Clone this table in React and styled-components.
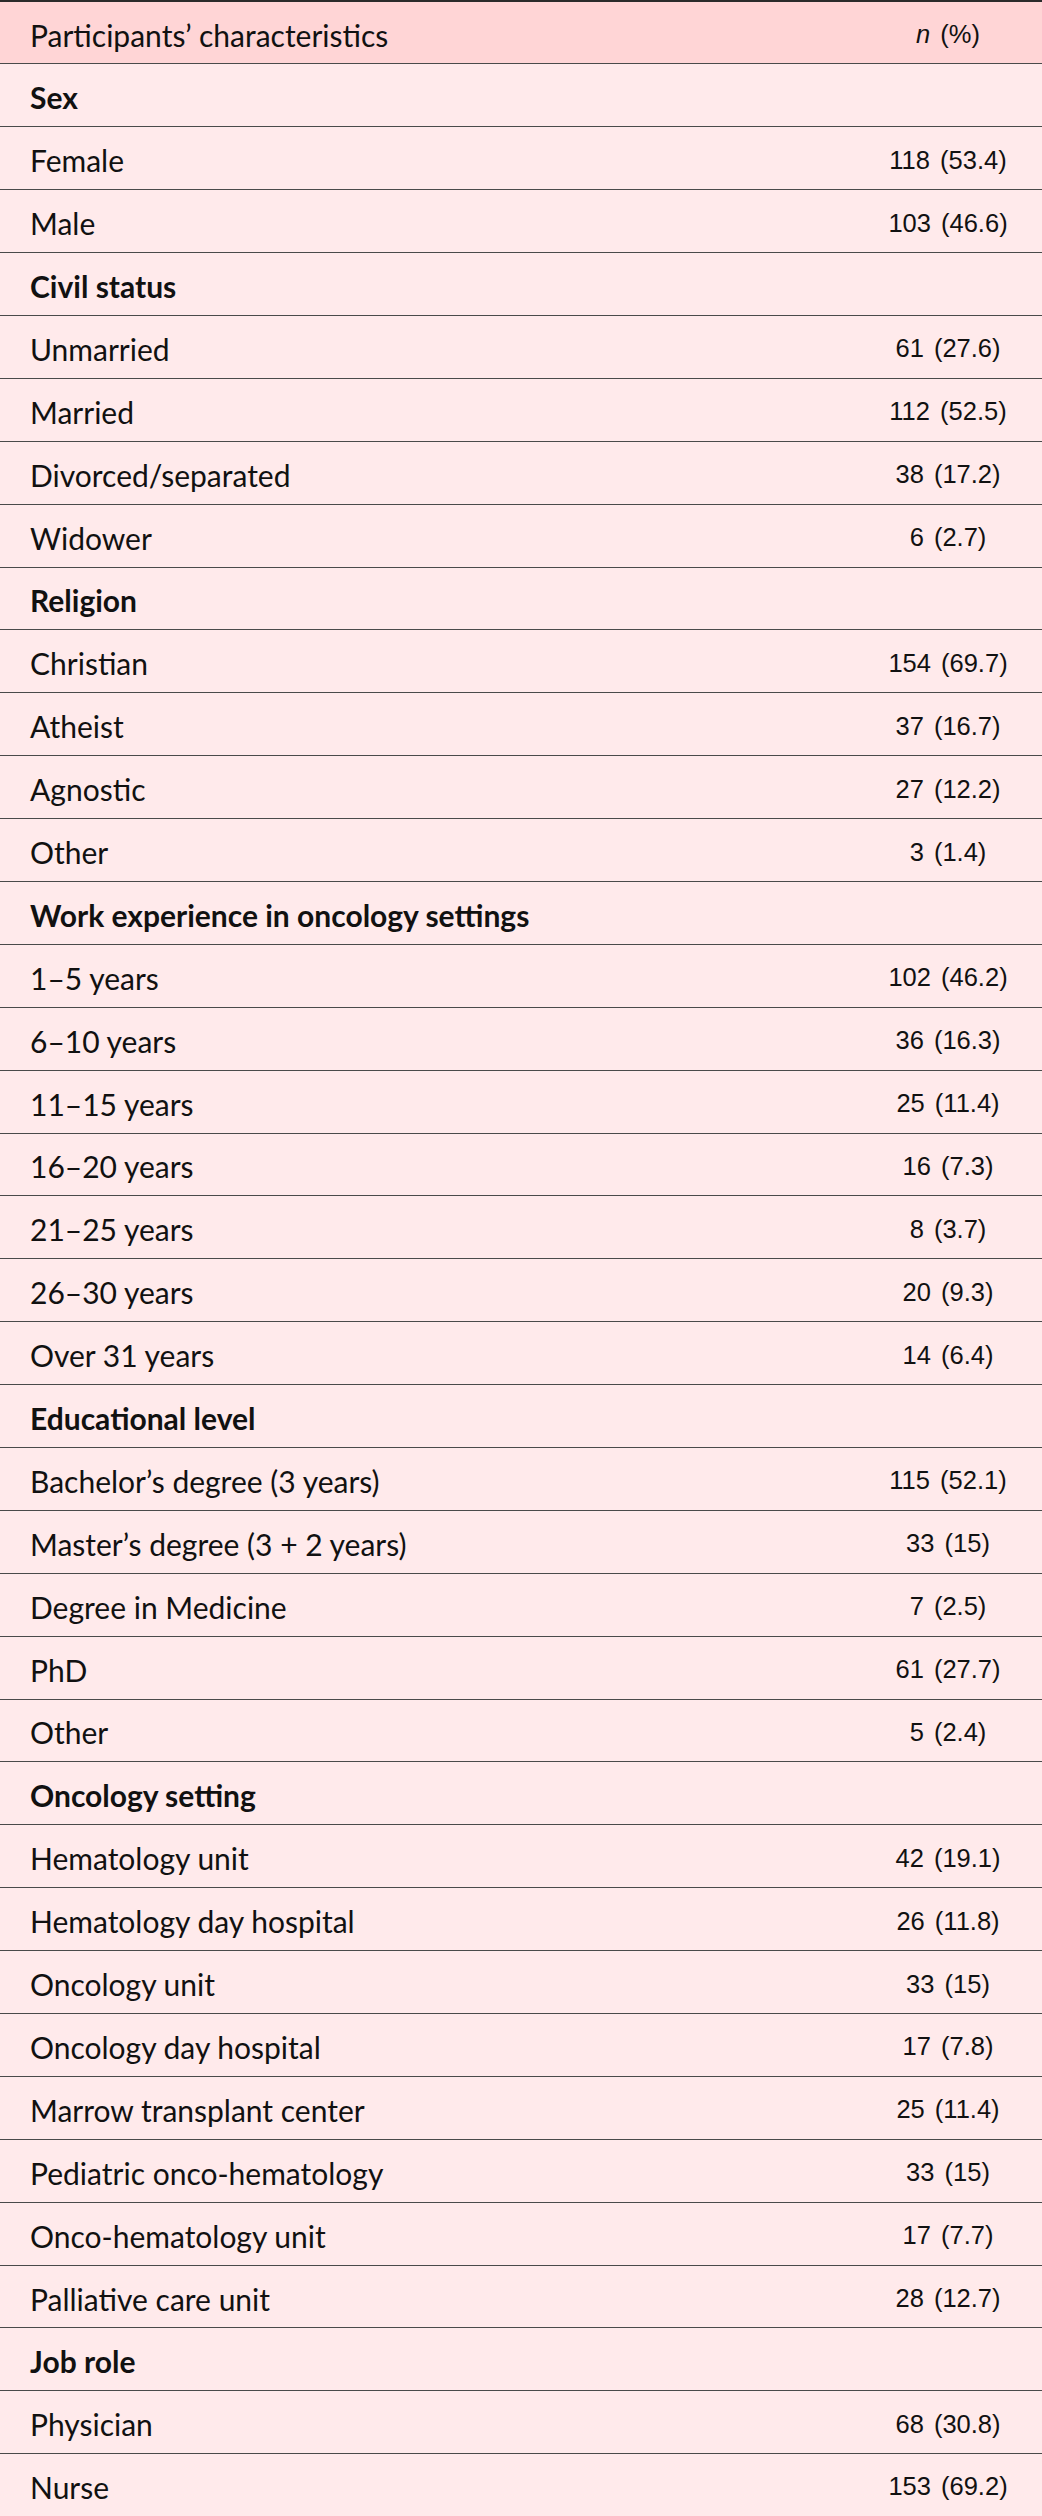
import React from 'react';
import styled, { createGlobalStyle } from 'styled-components';

const GlobalStyle = createGlobalStyle`
  body {
    margin: 0;
    background: #ffeaeb;
  }
`;

const groups = [
  {
    title: 'Sex',
    rows: [
      ['Female', '118 (53.4)'],
      ['Male', '103 (46.6)'],
    ],
  },
  {
    title: 'Civil status',
    rows: [
      ['Unmarried', '61 (27.6)'],
      ['Married', '112 (52.5)'],
      ['Divorced/separated', '38 (17.2)'],
      ['Widower', '6 (2.7)'],
    ],
  },
  {
    title: 'Religion',
    rows: [
      ['Christian', '154 (69.7)'],
      ['Atheist', '37 (16.7)'],
      ['Agnostic', '27 (12.2)'],
      ['Other', '3 (1.4)'],
    ],
  },
  {
    title: 'Work experience in oncology settings',
    rows: [
      ['1–5 years', '102 (46.2)'],
      ['6–10 years', '36 (16.3)'],
      ['11–15 years', '25 (11.4)'],
      ['16–20 years', '16 (7.3)'],
      ['21–25 years', '8 (3.7)'],
      ['26–30 years', '20 (9.3)'],
      ['Over 31 years', '14 (6.4)'],
    ],
  },
  {
    title: 'Educational level',
    rows: [
      ['Bachelor’s degree (3 years)', '115 (52.1)'],
      ['Master’s degree (3 + 2 years)', '33 (15)'],
      ['Degree in Medicine', '7 (2.5)'],
      ['PhD', '61 (27.7)'],
      ['Other', '5 (2.4)'],
    ],
  },
  {
    title: 'Oncology setting',
    rows: [
      ['Hematology unit', '42 (19.1)'],
      ['Hematology day hospital', '26 (11.8)'],
      ['Oncology unit', '33 (15)'],
      ['Oncology day hospital', '17 (7.8)'],
      ['Marrow transplant center', '25 (11.4)'],
      ['Pediatric onco-hematology', '33 (15)'],
      ['Onco-hematology unit', '17 (7.7)'],
      ['Palliative care unit', '28 (12.7)'],
    ],
  },
  {
    title: 'Job role',
    rows: [
      ['Physician', '68 (30.8)'],
      ['Nurse', '153 (69.2)'],
    ],
  },
];

const App = () => {
  return (
    <>
      <GlobalStyle />
      <Table>
        <colgroup>
          <col />
          <col style={{ width: 188 }} />
        </colgroup>
        <thead>
          <HeadRow>
            <Label>Participants’ characteristics</Label>
            <Value>
              <em>n</em> (%)
            </Value>
          </HeadRow>
        </thead>
        <tbody>
          {groups.map((g) => (
            <React.Fragment key={g.title}>
              <Row>
                <Label bold>{g.title}</Label>
                <Value />
              </Row>
              {g.rows.map(([label, value]) => (
                <Row key={g.title + label}>
                  <Label>{label}</Label>
                  <Value>{value}</Value>
                </Row>
              ))}
            </React.Fragment>
          ))}
        </tbody>
      </Table>
    </>
  );
};

const Table = styled.table`
  width: 100%;
  border-collapse: collapse;
  table-layout: fixed;
  background: #ffeaeb;
  color: #111;
  border-top: 2px solid #2b2b2b;
  border-bottom: 2px solid #2b2b2b;
`;

const Row = styled.tr`
  height: 62.9px;
  border-bottom: 1px solid #4a4a4a;
`;

const HeadRow = styled(Row)`
  background: #ffd5d6;
`;

const Label = styled.td`
  padding: 4px 0 0 30px;
  vertical-align: middle;
  font-family: Lato, 'Noto Sans', sans-serif;
  font-size: 30px;
  font-weight: ${(p) => (p.bold ? 700 : 400)};
  white-space: nowrap;
`;

const Value = styled.td`
  padding: 4px 0 0;
  text-align: center;
  vertical-align: middle;
  font-family: 'Liberation Sans', Arial, sans-serif;
  font-size: 25.5px;
  word-spacing: 3px;
  white-space: nowrap;
  em {
    font-style: italic;
  }
`;

export default App;
